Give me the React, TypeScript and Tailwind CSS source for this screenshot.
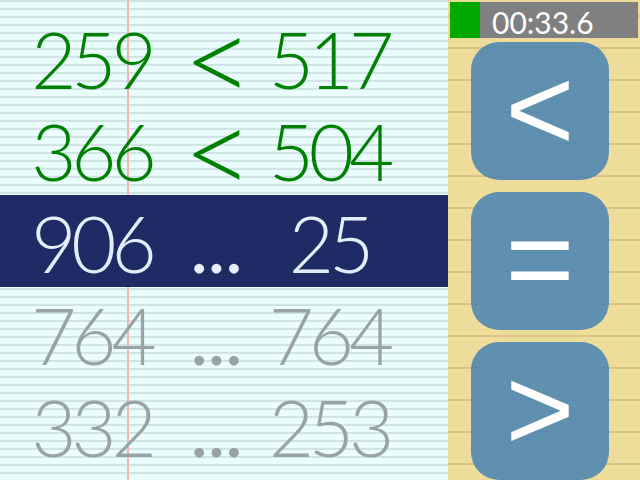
import React from 'react'

type Row = { a: string; op: string; b: string; tone: 'done' | 'active' | 'next' }

const rows: Row[] = [
  { a: '259', op: '<', b: '517', tone: 'done' },
  { a: '366', op: '<', b: '504', tone: 'done' },
  { a: '906', op: '...', b: '25', tone: 'active' },
  { a: '764', op: '...', b: '764', tone: 'next' },
  { a: '332', op: '...', b: '253', tone: 'next' },
]

function toneClass(tone: Row['tone']) {
  if (tone === 'done') return 'text-[#008000]'
  if (tone === 'active') return 'text-[#e3eefa] bg-[#172460]/[0.97]'
  return 'text-[#9aa3a3]'
}

function CompareRow({ row }: { row: Row }) {
  return (
    <div
      className={`grid h-[92px] shrink-0 grid-cols-[183px_66px_160px] items-center text-[78px] font-light leading-none ${toneClass(row.tone)}`}
    >
      <span className="pt-[4px] text-center tracking-[-5px]">{row.a}</span>
      {row.op === '<' ? (
        <span className="text-center text-[122px] leading-[92px]">{row.op}</span>
      ) : (
        <span className="pt-[4px] text-center font-normal tracking-[-1px]">{row.op}</span>
      )}
      <span className="pt-[4px] text-center tracking-[-5px]">{row.b}</span>
    </div>
  )
}

function OpButton({ label }: { label: string }) {
  return (
    <button className="flex h-[138px] w-[138px] shrink-0 items-center justify-center rounded-[28px] bg-[#4682b4]/85 font-['Liberation_Sans',sans-serif] text-[118px] leading-[138px] text-white">
      <span className="relative -top-[2px]">{label}</span>
    </button>
  )
}

export default function App() {
  return (
    <div className="flex h-[480px] w-[640px] overflow-hidden font-['Lato','Liberation_Sans',sans-serif]">
      {/* notebook side */}
      <div className="relative flex h-full w-[448px] flex-col overflow-hidden bg-[repeating-linear-gradient(to_bottom,#d0e4e4_0px,#d0e4e4_2px,#ebfefe_2px,#ebfefe_8px)] pt-[11px]">
        <div className="absolute inset-y-0 left-[127px] w-[2px] bg-[#f3b4b4]" />
        <div className="relative flex flex-col">
          {rows.map((r, i) => (
            <CompareRow key={i} row={r} />
          ))}
        </div>
      </div>

      {/* control side */}
      <div className="flex h-full w-[192px] flex-col bg-[repeating-linear-gradient(to_bottom,#eedc9a_0px,#eedc9a_15px,#d8c488_15px,#d8c488_17px,#eedc9a_17px,#eedc9a_32px)]">
        <div className="mx-[2px] mt-[2px] flex h-[37px]">
          <div className="w-[30px] bg-[#00a800]" />
          <div className="flex flex-1 items-center bg-[#808080] pl-[12px] pt-[3px] text-[30px] font-normal leading-none text-white">
            00:33.6
          </div>
        </div>
        <div className="mt-[4px] flex flex-col gap-[12px] pl-[23px]">
          <OpButton label="<" />
          <OpButton label="=" />
          <OpButton label=">" />
        </div>
      </div>
    </div>
  )
}
